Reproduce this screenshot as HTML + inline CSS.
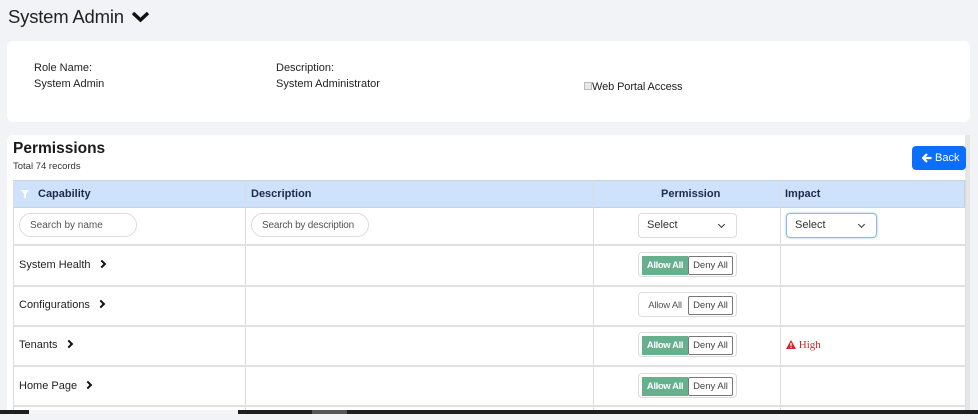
<!DOCTYPE html>
<html><head><style>
*{box-sizing:border-box;margin:0;padding:0}
body{width:978px;height:420px;overflow:hidden;background:#f2f3f6;font-family:"Liberation Sans",sans-serif;color:#222;position:relative}
.abs{position:absolute}
.card{position:absolute;background:#fff;border-radius:6px}
.t12{font-size:11px}
.hdr{position:absolute;left:13px;top:180px;width:952px;height:28px;background:#cfe2fb;border:1px solid #c9d3df}
.hc{position:absolute;top:0;height:26px;line-height:26px;font-size:11px;font-weight:bold;color:#1b2a4a}
.vl{position:absolute;width:1px;background:#dcdcdc}
.hl{position:absolute;left:13px;width:952px;height:2px;background:#e0e0e0}
.srch{position:absolute;height:24px;border:1px solid #ddd;border-radius:12px;font-size:10px;color:#555;line-height:24px;padding-left:10px}
.sel{position:absolute;width:99px;height:25px;border:1px solid #ddd;border-radius:4px;font-size:11px;line-height:23px;padding-left:8px;color:#333}
.sel:after{content:"";position:absolute;right:12px;top:8px;width:4px;height:4px;border-right:1.3px solid #333;border-bottom:1.3px solid #333;transform:rotate(45deg)}
.tog{position:absolute;left:638px;width:99px;height:25px;border:1px solid #ddd;border-radius:4px}
.al{position:absolute;left:3px;top:3px;width:46px;height:19px;font-size:9.5px;line-height:19px;text-align:center;color:#555;letter-spacing:-0.2px}
.al.on{background:#66b08e;color:#fff;font-weight:bold;letter-spacing:-0.4px}
.dn{position:absolute;left:49px;top:3px;width:45px;height:19px;border:1px solid #777;border-radius:2px;font-size:9.5px;line-height:17px;text-align:center;color:#444}
.rn{position:absolute;left:19px;font-size:11px;color:#222;line-height:13px}
.rn b{display:inline-block;margin-left:8px;width:6px;height:6px;border-right:2.5px solid #111;border-top:2.5px solid #111;transform:rotate(45deg);position:relative;top:-1px}
</style></head><body>
<div class="abs" style="left:8px;top:6px;font-size:18.5px;color:#222;letter-spacing:-0.2px">System Admin</div>
<svg class="abs" style="left:131px;top:11px" width="19" height="12" viewBox="0 0 19 12"><path d="M2 2 L9.5 9 L17 2" stroke="#111" stroke-width="3.5" fill="none"/></svg>

<div class="card" style="left:7px;top:41px;width:963px;height:81px"></div>
<div class="abs t12" style="left:34px;top:62px">Role Name:</div>
<div class="abs t12" style="left:34px;top:78px">System Admin</div>
<div class="abs t12" style="left:276px;top:62px">Description:</div>
<div class="abs t12" style="left:276px;top:78px">System Administrator</div>
<div class="abs" style="left:584px;top:82px;width:8px;height:8px;border:1px solid #bbb;background:#e8e8e8"></div>
<div class="abs t12" style="left:592px;top:81px;letter-spacing:-0.1px">Web Portal Access</div>

<div class="card" style="left:7px;top:135px;width:963px;height:285px"></div>
<div class="abs" style="left:965px;top:135px;width:5px;height:275px;background:#e6e6e6"></div>
<div class="abs" style="left:13px;top:140px;font-size:15.5px;font-weight:bold;color:#1a1a1a">Permissions</div>
<div class="abs" style="left:13px;top:161px;font-size:9.5px;color:#333">Total 74 records</div>
<div class="abs" style="left:912px;top:146px;width:54px;height:24px;background:#0d6efd;border-radius:4px;color:#fff;font-size:11px;line-height:24px">
<svg class="abs" style="left:10px;top:7px" width="10" height="10" viewBox="0 0 10 10"><path d="M5 1L1 5L5 9M1 5H9.5" stroke="#fff" stroke-width="2.2" fill="none"/></svg>
<span class="abs" style="left:23px;top:0">Back</span></div>

<div class="hdr">
<svg class="abs" style="left:7px;top:9px" width="8" height="8" viewBox="0 0 8 8"><path d="M0 0H8L5 4V8H3V4Z" fill="#fff"/></svg>
<div class="hc" style="left:24px">Capability</div>
<div class="hc" style="left:237px">Description</div>
<div class="hc" style="left:647px">Permission</div>
<div class="hc" style="left:771px">Impact</div>
</div>
<div class="vl" style="left:13px;top:180px;height:230px"></div>
<div class="vl" style="left:245px;top:180px;height:230px"></div>
<div class="vl" style="left:593px;top:180px;height:230px"></div>
<div class="vl" style="left:780px;top:180px;height:230px"></div>
<div class="vl" style="left:965px;top:180px;height:230px"></div>

<div class="srch" style="left:19px;top:213px;width:118px">Search by name</div>
<div class="srch" style="left:251px;top:213px;width:118px;letter-spacing:-0.2px">Search by description</div>
<div class="sel" style="left:638px;top:213px">Select</div>
<div class="sel" style="left:786px;top:213px;width:91px;border-color:#8fb6ee;box-shadow:0 0 2px #9cc0f5">Select</div>

<div class="hl" style="top:244px"></div>
<div class="hl" style="top:285px"></div>
<div class="hl" style="top:325px"></div>
<div class="hl" style="top:365px"></div>
<div class="hl" style="top:405px"></div>

<div class="rn" style="top:259px">System Health<b></b></div>
<div class="tog" style="top:252px"><div class="al on">Allow All</div><div class="dn">Deny All</div></div>
<div class="rn" style="top:299px">Configurations<b></b></div>
<div class="tog" style="top:292px"><div class="al">Allow All</div><div class="dn">Deny All</div></div>
<div class="rn" style="top:339px">Tenants<b></b></div>
<div class="tog" style="top:332px"><div class="al on">Allow All</div><div class="dn">Deny All</div></div>
<div class="abs" style="left:786px;top:339px;font-family:'Liberation Serif',serif;font-size:11px;color:#d9232e"><svg width="10" height="9" viewBox="0 0 10 9" style="vertical-align:-1px"><path d="M5 0L10 9H0Z" fill="#d9232e"/><rect x="4.4" y="3" width="1.2" height="3" fill="#fff"/><rect x="4.4" y="6.8" width="1.2" height="1.2" fill="#fff"/></svg> High</div>
<div class="rn" style="top:380px">Home Page<b></b></div>
<div class="tog" style="top:373px"><div class="al on">Allow All</div><div class="dn">Deny All</div></div>

<div class="abs" style="left:0;top:410px;width:978px;height:4px;background:#1e1e1e"></div>
<div class="abs" style="left:29px;top:410px;width:209px;height:4px;background:#f4f4f4"></div>
<div class="abs" style="left:312px;top:410px;width:35px;height:4px;background:#555"></div>
<div class="abs" style="left:0;top:414px;width:978px;height:6px;background:#f2f3f6"></div>
</body></html>
